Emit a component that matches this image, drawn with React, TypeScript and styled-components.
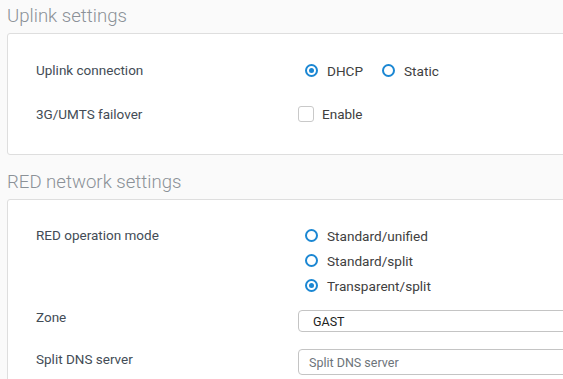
import styled, { createGlobalStyle } from "styled-components";

const GlobalStyle = createGlobalStyle`
  html, body {
    margin: 0;
    padding: 0;
    background: #fafafa;
    overflow: hidden;
  }
  body {
    font-family: Roboto, "Liberation Sans", Arial, sans-serif;
    color: #333c46;
  }
`;

const Page = styled.div`
  width: 620px;
  padding-left: 7px;
`;

const SectionTitle = styled.h2<{ $first?: boolean }>`
  margin: ${(p) => (p.$first ? "0" : "11px")} 0 0 0;
  height: 33px;
  line-height: 33px;
  font-size: 18.6px;
  font-weight: 300;
  color: #8b9197;
`;

const Card = styled.div<{ $pt: number; $pb: number }>`
  background: #fff;
  border: 1px solid #dedede;
  border-radius: 3px;
  padding: ${(p) => p.$pt}px 28px ${(p) => p.$pb}px 28px;
  display: flex;
  flex-direction: column;
`;

const Row = styled.div<{ $mt?: number }>`
  display: grid;
  grid-template-columns: 262px 1fr;
  align-items: start;
  margin-top: ${(p) => p.$mt ?? 0}px;
`;

const Label = styled.div<{ $pt?: number }>`
  font-size: 13.5px;
  line-height: 14px;
  padding-top: ${(p) => p.$pt ?? 0}px;
  color: #434c56;
`;

const RadioGroup = styled.div<{ $column?: boolean }>`
  display: flex;
  flex-direction: ${(p) => (p.$column ? "column" : "row")};
  gap: ${(p) => (p.$column ? "0" : "19px")};
  padding-left: 7px;
`;

const RadioItem = styled.label`
  display: flex;
  align-items: center;
  gap: 9px;
  height: 25px;
  font-size: 13.6px;
  color: #404040;
`;

const RadioCircle = styled.span<{ $checked?: boolean }>`
  box-sizing: border-box;
  width: 13px;
  height: 13px;
  border-radius: 50%;
  border: 2px solid #1b87d3;
  display: flex;
  align-items: center;
  justify-content: center;

  &::after {
    content: "";
    display: ${(p) => (p.$checked ? "block" : "none")};
    width: 5px;
    height: 5px;
    border-radius: 50%;
    background: #1b87d3;
  }
`;

const CheckItem = styled.label`
  display: flex;
  align-items: center;
  gap: 8px;
  height: 22px;
  font-size: 13.5px;
  color: #404040;
`;

const CheckBox = styled.span`
  box-sizing: border-box;
  width: 16px;
  height: 16px;
  border: 1px solid #c9c9c9;
  border-radius: 3px;
  background: #fff;
`;

const Field = styled.div<{ $h: number; $pl: number; $muted?: boolean }>`
  box-sizing: border-box;
  height: ${(p) => p.$h}px;
  border: 1px solid #c4c4c4;
  border-radius: 4px;
  background: #fff;
  padding-left: ${(p) => p.$pl}px;
  display: flex;
  align-items: center;
  font-size: 12.5px;
  color: ${(p) => (p.$muted ? "#6d747a" : "#222")};
`;

const Radio = ({ label, checked }: { label: string; checked?: boolean }) => (
  <RadioItem>
    <RadioCircle $checked={checked} />
    {label}
  </RadioItem>
);

export default function App() {
  return (
    <Page>
      <GlobalStyle />
      <SectionTitle $first>Uplink settings</SectionTitle>
      <Card $pt={24} $pb={29}>
        <Row>
          <Label $pt={5}>Uplink connection</Label>
          <RadioGroup>
            <Radio label="DHCP" checked />
            <Radio label="Static" />
          </RadioGroup>
        </Row>
        <Row $mt={20}>
          <Label $pt={4}>3G/UMTS failover</Label>
          <CheckItem>
            <CheckBox />
            Enable
          </CheckItem>
        </Row>
      </Card>

      <SectionTitle>RED network settings</SectionTitle>
      <Card $pt={23} $pb={20}>
        <Row>
          <Label $pt={5}>RED operation mode</Label>
          <RadioGroup $column>
            <Radio label="Standard/unified" />
            <Radio label="Standard/split" />
            <Radio label="Transparent/split" checked />
          </RadioGroup>
        </Row>
        <Row $mt={12}>
          <Label $pt={-1}>Zone</Label>
          <Field $h={22} $pl={14}>GAST</Field>
        </Row>
        <Row $mt={17}>
          <Label $pt={3}>Split DNS server</Label>
          <Field $h={26} $pl={10} $muted>
            Split DNS server
          </Field>
        </Row>
      </Card>
    </Page>
  );
}
